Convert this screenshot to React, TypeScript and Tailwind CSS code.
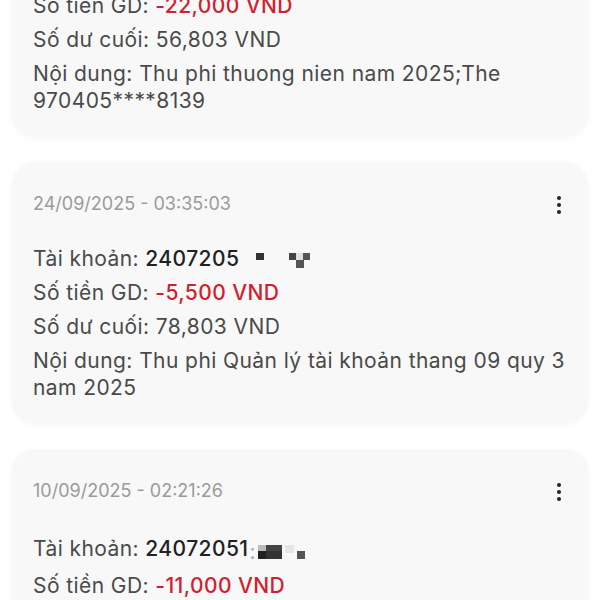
import React from "react";

interface Txn {
  date: string;
  account: string;
  redact: "a" | "b";
  amount: string;
  balance: string;
  content: string;
}

const txns: Txn[] = [
  {
    date: "25/09/2025 - 02:10:44",
    account: "2407205",
    redact: "a",
    amount: "-22,000 VND",
    balance: "56,803 VND",
    content: "Thu phi thuong nien nam 2025;The 970405****8139",
  },
  {
    date: "24/09/2025 - 03:35:03",
    account: "2407205",
    redact: "a",
    amount: "-5,500 VND",
    balance: "78,803 VND",
    content: "Thu phi Quản lý tài khoản thang 09 quy 3 nam 2025",
  },
  {
    date: "10/09/2025 - 02:21:26",
    account: "24072051",
    redact: "b",
    amount: "-11,000 VND",
    balance: "89,803 VND",
    content: "Thu phi Quản lý tài khoản thang 08 quy 3 nam 2025",
  },
];

// ô che số tài khoản (pixel hoá)
function Redacted({ kind }: { kind: "a" | "b" }) {
  if (kind === "a") {
    return (
      <span className="inline-flex items-start ml-[17px] gap-[25px] pt-[4px]">
        <span className="w-[8px] h-[7px] bg-[#333] inline-block" />
        <span className="inline-flex flex-col">
          <span className="flex">
            <span className="w-[7px] h-[7px] bg-[#444]" />
            <span className="w-[7px] h-[7px] bg-[#e0e0e0]" />
            <span className="w-[7px] h-[7px] bg-[#555]" />
          </span>
          <span className="flex pl-[7px]">
            <span className="w-[8px] h-[8px] bg-[#555]" />
          </span>
        </span>
      </span>
    );
  }
  return (
    <span className="inline-flex items-end ml-[1px] pt-[6px]">
      <span className="text-[#aaa] mr-[2px]">:</span>
      <span className="flex flex-col mb-[6px]">
        <span className="flex">
          <span className="w-[8px] h-[6px] bg-[#bbb]" />
          <span className="w-[16px] h-[6px] bg-[#444]" />
        </span>
        <span className="flex">
          <span className="w-[8px] h-[8px] bg-[#222]" />
          <span className="w-[16px] h-[8px] bg-[#333]" />
        </span>
      </span>
      <span className="w-[9px] h-[8px] bg-[#e6e6e6] ml-[3px] mb-[12px]" />
      <span className="w-[8px] h-[8px] bg-[#555] ml-[3px] mb-[6px]" />
    </span>
  );
}

function Kebab() {
  return (
    <div className="flex flex-col items-center gap-[3px] pt-[2px]">
      <span className="w-[4px] h-[4px] rounded-full bg-[#222]" />
      <span className="w-[4px] h-[4px] rounded-full bg-[#222]" />
      <span className="w-[4px] h-[4px] rounded-full bg-[#222]" />
    </div>
  );
}

function TxnCard({ t }: { t: Txn }) {
  return (
    <div className="rounded-[24px] bg-[#f8f8f8] shadow-[0_1px_6px_rgba(0,0,0,0.04)] pl-[21px] pr-[20px] pt-[29px] pb-[23px]">
      <div className="flex items-center justify-between pr-[7px]">
        <span className="text-[18px] leading-[26px] text-[#9a9a9a]">{t.date}</span>
        <Kebab />
      </div>
      <div className="mt-[28px] text-[21px] leading-[27px] tracking-[0.02em] text-[#4a4a4a] space-y-[7px]">
        <div className="flex items-center">
          <span>Tài khoản:&nbsp;</span>
          <span className="text-[#222] font-medium">{t.account}</span>
          <Redacted kind={t.redact} />
        </div>
        <div>
          Số tiền GD: <span className="text-[#d21f2f] font-medium">{t.amount}</span>
        </div>
        <div>Số dư cuối: {t.balance}</div>
        <div>Nội dung: {t.content}</div>
      </div>
    </div>
  );
}

export default function App() {
  return (
    <div className="w-[600px] h-[600px] overflow-hidden bg-white font-['Inter',sans-serif]">
      <div className="px-[12px] mt-[-125px] flex flex-col gap-[25px]">
        {txns.map((t) => (
          <TxnCard key={t.date} t={t} />
        ))}
      </div>
    </div>
  );
}
